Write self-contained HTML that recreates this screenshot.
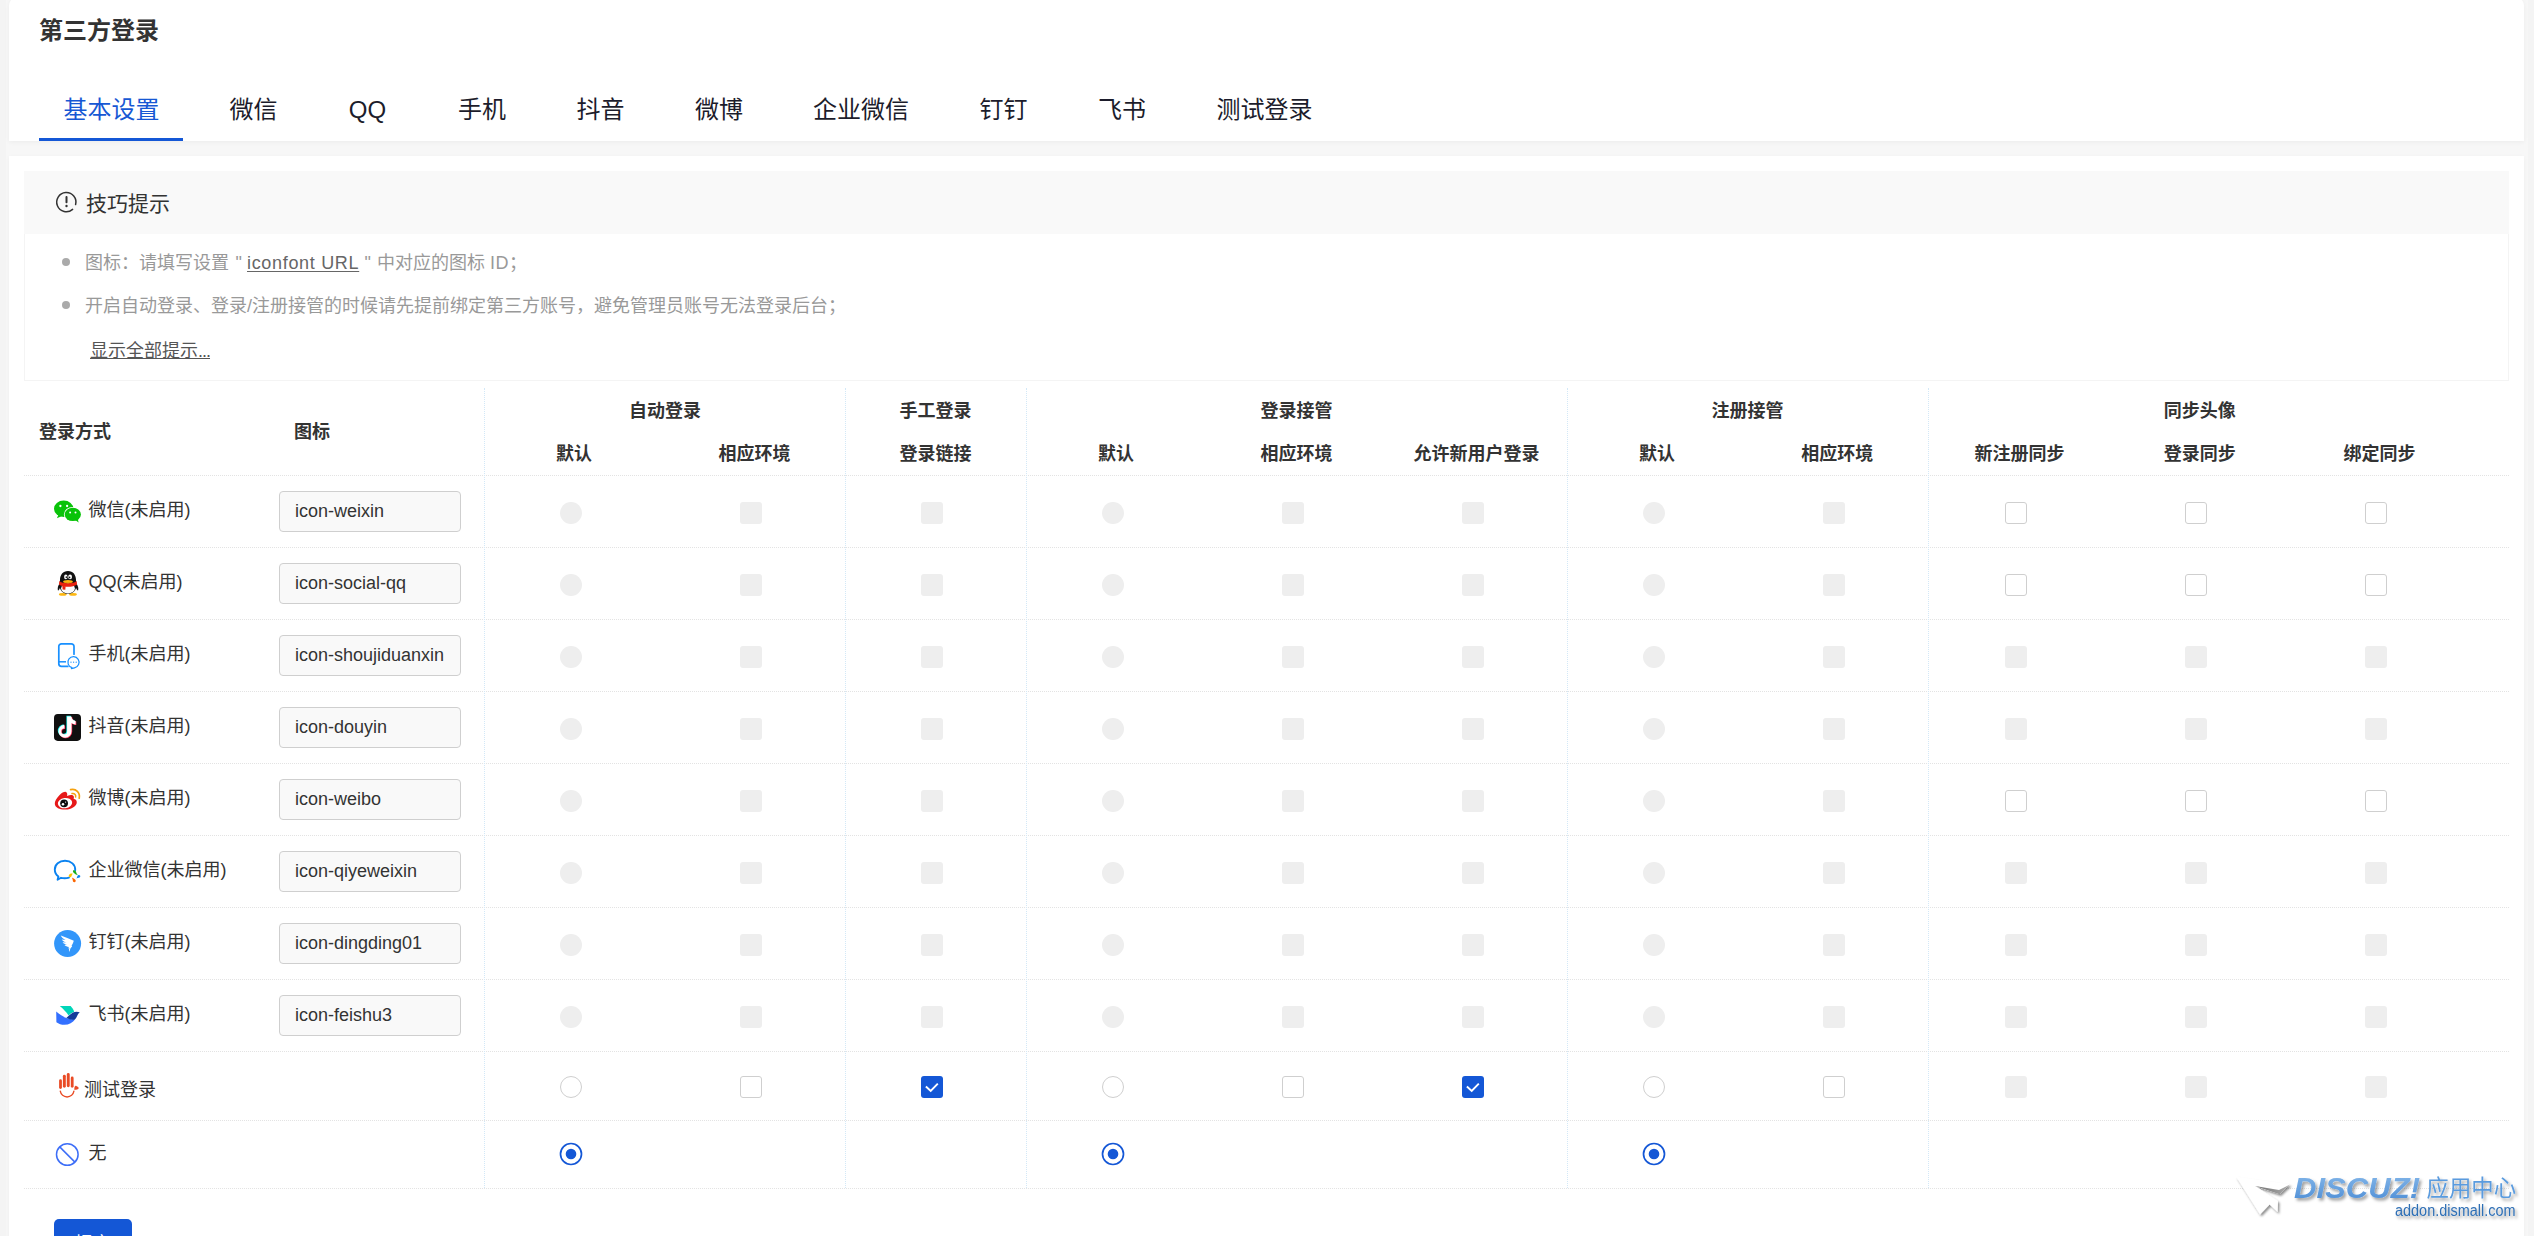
<!DOCTYPE html>
<html lang="zh-CN"><head><meta charset="utf-8"><title>第三方登录</title>
<style>
*{box-sizing:border-box;margin:0;padding:0}
html,body{width:2534px;height:1236px;overflow:hidden;background:#f4f4f4}
#wrap{position:absolute;left:6px;top:0;width:2522px;height:1236px;background:#f7f7f7}
body{position:relative;font-family:"Liberation Sans","Noto Sans CJK SC",sans-serif;color:#333;font-size:18px}
.abs{position:absolute}
#card1{position:absolute;left:9px;top:-4px;width:2515px;height:145px;background:#fff;border-radius:10px 10px 0 0;box-shadow:0 1px 5px rgba(0,0,0,.05)}
#title{position:absolute;left:39px;top:14px;font-size:24px;font-weight:bold;line-height:34px;color:#333;white-space:nowrap}
.tab{position:absolute;top:90px;height:40px;line-height:40px;font-size:24px;color:#1c1c2b;text-align:center;white-space:nowrap}
.tab.on{color:#1758d4}
#tabline{position:absolute;left:39px;top:138px;width:144px;height:3px;background:#1457d6}
#card2{position:absolute;left:9px;top:156px;width:2515px;height:1100px;background:#fff;box-shadow:0 1px 4px rgba(0,0,0,.04)}
#tips{position:absolute;left:24px;top:171px;width:2485px;height:210px;border:1px solid #f4f4f4;background:#fff}
#tipsh{position:absolute;left:24px;top:171px;width:2485px;height:63px;background:#f9f9f9}
#tipst{position:absolute;left:86px;top:189px;font-size:21px;line-height:30px;color:#333;white-space:nowrap}
.tip{position:absolute;left:85px;font-size:18px;line-height:26px;color:#999;white-space:nowrap}
.tip a,.more{color:#666;text-decoration:underline;text-underline-offset:2px}
.bul{position:absolute;left:62px;width:8px;height:8px;border-radius:50%;background:#aaa}
.more{position:absolute;left:90px;top:337.5px;font-size:18px;line-height:26px;color:#555;white-space:nowrap;text-underline-offset:1px}
.hl{position:absolute;left:24px;width:2485px;height:0;border-top:1px dotted #e3e3e3}
.vl{position:absolute;top:388px;height:800px;width:0;border-left:1px dotted #d3e8f7}
.th{position:absolute;font-weight:bold;font-size:18px;line-height:26px;color:#333;white-space:nowrap;transform:translateX(-50%)}
.thl{position:absolute;font-weight:bold;font-size:18px;line-height:26px;color:#333;white-space:nowrap}
.lab{position:absolute;font-size:18px;line-height:26px;color:#333;white-space:nowrap}
.inp{position:absolute;left:279px;width:182px;height:41px;border:1px solid #cfcfcf;border-radius:4px;background:#f9f9f9;font-family:"Liberation Sans",sans-serif;font-size:18px;line-height:39px;padding-left:15px;color:#333;white-space:nowrap;overflow:hidden}
.c{position:absolute;width:22px;height:22px}
.rd{border-radius:50%;background:#eee}
.cd{border-radius:3px;background:#eee}
.ru{border-radius:50%;background:#fff;border:1px solid #cfcfcf}
.cu{border-radius:3px;background:#fff;border:1px solid #cfcfcf}
.cc{border-radius:3px;background:#1457d6}
.rc{overflow:visible}
.ic{position:absolute;overflow:visible}
#btn{position:absolute;left:54px;top:1219px;width:78px;height:50px;border-radius:5px;background:#1457d6;color:#fff;font-size:18px;line-height:50px;text-align:center}
</style></head><body>
<div id="wrap"></div>
<div id="card1"></div>
<div id="title">第三方登录</div>
<div class="tab on" style="left:31.5px;width:160px">基本设置</div>
<div class="tab" style="left:173.5px;width:160px">微信</div>
<div class="tab" style="left:287.5px;width:160px">QQ</div>
<div class="tab" style="left:402.0px;width:160px">手机</div>
<div class="tab" style="left:520.5px;width:160px">抖音</div>
<div class="tab" style="left:639.0px;width:160px">微博</div>
<div class="tab" style="left:781.0px;width:160px">企业微信</div>
<div class="tab" style="left:923.5px;width:160px">钉钉</div>
<div class="tab" style="left:1042.0px;width:160px">飞书</div>
<div class="tab" style="left:1184.5px;width:160px">测试登录</div>
<div id="tabline"></div>
<div id="card2"></div>
<div id="tips"></div><div id="tipsh"></div>
<svg class="ic" style="left:55px;top:190px" width="23" height="23" viewBox="0 0 23 23"><path d="M17.6 19.4 A9.6 9.6 0 1 1 20.6 14.6" fill="none" stroke="#333" stroke-width="1.5" stroke-linecap="round"/><rect x="10.5" y="6" width="2" height="7.2" rx=".9" fill="#333"/><circle cx="11.5" cy="16" r="1.2" fill="#333"/></svg>
<div id="tipst">技巧提示</div>
<div class="bul" style="top:258px"></div><div class="tip" style="top:250px">图标：请填写设置</div><div class="tip" style="top:250px;left:235.5px">"</div><div class="tip" style="top:250px;left:247px"><a style="letter-spacing:.68px">iconfont URL</a></div><div class="tip" style="top:250px;left:364.5px">"</div><div class="tip" style="top:250px;left:377px">中对应的图标</div><div class="tip" style="top:250px;left:490px;letter-spacing:.4px">ID</div><div class="tip" style="top:250px;left:509px">；</div>
<div class="bul" style="top:301px"></div><div class="tip" style="top:293px">开启自动登录、登录/注册接管的时候请先提前绑定第三方账号，避免管理员账号无法登录后台；</div>
<div class="more">显示全部提示<span style="letter-spacing:-1px">...</span></div>
<div class="hl" style="top:475px"></div>
<div class="hl" style="top:547px"></div>
<div class="hl" style="top:619px"></div>
<div class="hl" style="top:691px"></div>
<div class="hl" style="top:763px"></div>
<div class="hl" style="top:835px"></div>
<div class="hl" style="top:907px"></div>
<div class="hl" style="top:979px"></div>
<div class="hl" style="top:1051px"></div>
<div class="hl" style="top:1120px"></div>
<div class="hl" style="top:1188px"></div>
<div class="vl" style="left:484px"></div>
<div class="vl" style="left:845px"></div>
<div class="vl" style="left:1026px"></div>
<div class="vl" style="left:1567px"></div>
<div class="vl" style="left:1928px"></div>
<div class="thl" style="left:39px;top:419px">登录方式</div>
<div class="thl" style="left:294px;top:419px">图标</div>
<div class="th" style="left:665.0px;top:398px">自动登录</div>
<div class="th" style="left:935.6px;top:398px">手工登录</div>
<div class="th" style="left:1296.4px;top:398px">登录接管</div>
<div class="th" style="left:1747.4px;top:398px">注册接管</div>
<div class="th" style="left:2199.7px;top:398px">同步头像</div>
<div class="th" style="left:574.1px;top:441px">默认</div>
<div class="th" style="left:754.4px;top:441px">相应环境</div>
<div class="th" style="left:935.6px;top:441px">登录链接</div>
<div class="th" style="left:1115.9px;top:441px">默认</div>
<div class="th" style="left:1296.4px;top:441px">相应环境</div>
<div class="th" style="left:1476.4px;top:441px">允许新用户登录</div>
<div class="th" style="left:1656.9px;top:441px">默认</div>
<div class="th" style="left:1837.3px;top:441px">相应环境</div>
<div class="th" style="left:2019.4px;top:441px">新注册同步</div>
<div class="th" style="left:2199.7px;top:441px">登录同步</div>
<div class="th" style="left:2379.4px;top:441px">绑定同步</div>
<svg class="ic" style="left:40px;top:485px" width="60" height="60" viewBox="0 0 60 60"><ellipse cx="23.7" cy="23.7" rx="9.7" ry="8.2" fill="#09c309"/><path d="M18.6 29.2 L16.9 33.3 L22 31 Z" fill="#09c309"/><ellipse cx="32.8" cy="29.4" rx="8.9" ry="7.5" fill="#fff"/><ellipse cx="32.8" cy="29.4" rx="8.1" ry="6.7" fill="#09c309"/><path d="M35.2 35 L38.6 37.4 L37.6 33.6 Z" fill="#09c309"/><circle cx="20.4" cy="21" r="1.15" fill="#fff"/><circle cx="27.1" cy="21" r="1.15" fill="#fff"/><circle cx="30.1" cy="27.5" r="1" fill="#fff"/><circle cx="35.5" cy="27.5" r="1" fill="#fff"/></svg>
<div class="lab" style="left:88.5px;top:497px">微信(未启用)</div>
<div class="inp" style="top:491px">icon-weixin</div>
<div class="c rd" style="left:560.0px;top:502px"></div>
<div class="c cd" style="left:740.0px;top:502px"></div>
<div class="c cd" style="left:921.0px;top:502px"></div>
<div class="c rd" style="left:1102.0px;top:502px"></div>
<div class="c cd" style="left:1282.0px;top:502px"></div>
<div class="c cd" style="left:1462.0px;top:502px"></div>
<div class="c rd" style="left:1643.0px;top:502px"></div>
<div class="c cd" style="left:1823.0px;top:502px"></div>
<div class="c cu" style="left:2005.0px;top:502px"></div>
<div class="c cu" style="left:2185.0px;top:502px"></div>
<div class="c cu" style="left:2365.0px;top:502px"></div>
<svg class="ic" style="left:40px;top:557px" width="60" height="60" viewBox="0 0 60 60"><ellipse cx="22.8" cy="37.4" rx="3.9" ry="1.4" fill="#fdb813"/><ellipse cx="33" cy="37.4" rx="3.9" ry="1.4" fill="#fdb813"/><path d="M19.6 26.5 C18 28.5 17.2 31.5 18 33.8 C19 33 19.8 31.5 20.4 30 Z" fill="#111"/><path d="M36.4 26.5 C38 28.5 38.8 31.5 38 33.8 C37 33 36.2 31.5 35.6 30 Z" fill="#111"/><path d="M28 13.9 C22.8 13.9 20 17.8 20 22.8 C20 24.5 19.6 26 19.6 28 C19.6 33.5 23 36.8 28 36.8 C33 36.8 36.4 33.5 36.4 28 C36.4 26 36 24.5 36 22.8 C36 17.8 33.2 13.9 28 13.9 Z" fill="#111"/><ellipse cx="28" cy="31.5" rx="6.9" ry="5" fill="#fbfbfb"/><path d="M19.3 24 C22 27 34 27 36.7 24 L37 27.4 C33 30.6 23 30.6 19 27.4 Z" fill="#e8220e"/><path d="M22.3 28.6 L25.6 29.6 L25.3 32.8 L22.6 32.4 Z" fill="#e8220e"/><ellipse cx="25.8" cy="19.9" rx="1.7" ry="2.3" fill="#fff"/><ellipse cx="30.1" cy="19.9" rx="1.9" ry="2.3" fill="#fff"/><ellipse cx="26.3" cy="20.2" rx=".7" ry="1" fill="#111"/><ellipse cx="29.6" cy="20.4" rx=".8" ry=".9" fill="#111"/><ellipse cx="28" cy="24.6" rx="4.9" ry="1.7" fill="#fbb40f"/><path d="M25.6 25.4 Q28 26.6 30.4 25.4" stroke="#d77e0a" stroke-width=".5" fill="none"/></svg>
<div class="lab" style="left:88.5px;top:569px">QQ(未启用)</div>
<div class="inp" style="top:563px">icon-social-qq</div>
<div class="c rd" style="left:560.0px;top:574px"></div>
<div class="c cd" style="left:740.0px;top:574px"></div>
<div class="c cd" style="left:921.0px;top:574px"></div>
<div class="c rd" style="left:1102.0px;top:574px"></div>
<div class="c cd" style="left:1282.0px;top:574px"></div>
<div class="c cd" style="left:1462.0px;top:574px"></div>
<div class="c rd" style="left:1643.0px;top:574px"></div>
<div class="c cd" style="left:1823.0px;top:574px"></div>
<div class="c cu" style="left:2005.0px;top:574px"></div>
<div class="c cu" style="left:2185.0px;top:574px"></div>
<div class="c cu" style="left:2365.0px;top:574px"></div>
<svg class="ic" style="left:40px;top:629px" width="60" height="60" viewBox="0 0 60 60"><path d="M34 25.2 V17.4 A2.6 2.6 0 0 0 31.4 14.8 H21.4 A2.6 2.6 0 0 0 18.8 17.4 V34.8 A2.6 2.6 0 0 0 21.4 37.4 H27.8" fill="none" stroke="#1890ff" stroke-width="1.7" stroke-linecap="round"/><path d="M18.8 32.8 H26" fill="none" stroke="#1890ff" stroke-width="1.5"/><path d="M32 38.7 A5.6 5.6 0 1 1 34.5 38.8 L31.4 39.6 Z" fill="#fff" stroke="#1890ff" stroke-width="1.2" stroke-linejoin="round"/><circle cx="31" cy="33.2" r=".65" fill="#1890ff"/><circle cx="33.6" cy="33.2" r=".65" fill="#1890ff"/><circle cx="36.2" cy="33.2" r=".65" fill="#1890ff"/></svg>
<div class="lab" style="left:88.5px;top:641px">手机(未启用)</div>
<div class="inp" style="top:635px">icon-shoujiduanxin</div>
<div class="c rd" style="left:560.0px;top:646px"></div>
<div class="c cd" style="left:740.0px;top:646px"></div>
<div class="c cd" style="left:921.0px;top:646px"></div>
<div class="c rd" style="left:1102.0px;top:646px"></div>
<div class="c cd" style="left:1282.0px;top:646px"></div>
<div class="c cd" style="left:1462.0px;top:646px"></div>
<div class="c rd" style="left:1643.0px;top:646px"></div>
<div class="c cd" style="left:1823.0px;top:646px"></div>
<div class="c cd" style="left:2005.0px;top:646px"></div>
<div class="c cd" style="left:2185.0px;top:646px"></div>
<div class="c cd" style="left:2365.0px;top:646px"></div>
<svg class="ic" style="left:40px;top:701px" width="60" height="60" viewBox="0 0 60 60"><rect x="14" y="12.9" width="27" height="27" rx="3.8" fill="#101010"/><path d="M27.1 15.4 H31.4 C31.7 17.8 33.2 19.6 35.6 20 V23.4 C34 23.4 32.6 22.9 31.5 22.1 V30.2 A6.5 6.5 0 1 1 24.4 23.8 V27.5 A2.9 2.9 0 1 0 27.1 30.4 Z" fill="#25f4ee" transform="translate(-.7,-.6)"/><path d="M27.1 15.4 H31.4 C31.7 17.8 33.2 19.6 35.6 20 V23.4 C34 23.4 32.6 22.9 31.5 22.1 V30.2 A6.5 6.5 0 1 1 24.4 23.8 V27.5 A2.9 2.9 0 1 0 27.1 30.4 Z" fill="#fe2c55" transform="translate(.7,.6)"/><path d="M27.1 15.4 H31.4 C31.7 17.8 33.2 19.6 35.6 20 V23.4 C34 23.4 32.6 22.9 31.5 22.1 V30.2 A6.5 6.5 0 1 1 24.4 23.8 V27.5 A2.9 2.9 0 1 0 27.1 30.4 Z" fill="#fff"/></svg>
<div class="lab" style="left:88.5px;top:713px">抖音(未启用)</div>
<div class="inp" style="top:707px">icon-douyin</div>
<div class="c rd" style="left:560.0px;top:718px"></div>
<div class="c cd" style="left:740.0px;top:718px"></div>
<div class="c cd" style="left:921.0px;top:718px"></div>
<div class="c rd" style="left:1102.0px;top:718px"></div>
<div class="c cd" style="left:1282.0px;top:718px"></div>
<div class="c cd" style="left:1462.0px;top:718px"></div>
<div class="c rd" style="left:1643.0px;top:718px"></div>
<div class="c cd" style="left:1823.0px;top:718px"></div>
<div class="c cd" style="left:2005.0px;top:718px"></div>
<div class="c cd" style="left:2185.0px;top:718px"></div>
<div class="c cd" style="left:2365.0px;top:718px"></div>
<svg class="ic" style="left:40px;top:773px" width="60" height="60" viewBox="0 0 60 60"><path d="M26.6 19.4 C25.6 18.2 22.6 19 19.6 22 C16.4 25.2 14.6 28.4 14.8 31 C15.2 34.8 20 36.8 25.4 36.6 C31.6 36.4 36.8 33.2 36.8 29.2 C36.8 27.2 35.2 26.2 33.6 25.8 C34.2 24.4 34 23 33 22.4 C31.6 21.6 29.4 22 27 23 C27.4 21.6 27.4 20.2 26.6 19.4 Z" fill="#e6191a"/><ellipse cx="25" cy="30.1" rx="7.2" ry="5.1" fill="#fff" transform="rotate(-8 25 30.1)"/><circle cx="24.1" cy="30.3" r="3.9" fill="#0c0c0c"/><circle cx="23" cy="31.2" r="1.25" fill="#fff"/><circle cx="25.6" cy="29.1" r=".6" fill="#fff"/><path d="M30.6 16.6 C36 15.2 40.4 19.6 39.2 25.2" fill="none" stroke="#f5a10e" stroke-width="1.7" stroke-linecap="round"/><path d="M32 20.6 C34.4 20 36.2 21.8 35.6 24" fill="none" stroke="#f5a10e" stroke-width="1.5" stroke-linecap="round"/></svg>
<div class="lab" style="left:88.5px;top:785px">微博(未启用)</div>
<div class="inp" style="top:779px">icon-weibo</div>
<div class="c rd" style="left:560.0px;top:790px"></div>
<div class="c cd" style="left:740.0px;top:790px"></div>
<div class="c cd" style="left:921.0px;top:790px"></div>
<div class="c rd" style="left:1102.0px;top:790px"></div>
<div class="c cd" style="left:1282.0px;top:790px"></div>
<div class="c cd" style="left:1462.0px;top:790px"></div>
<div class="c rd" style="left:1643.0px;top:790px"></div>
<div class="c cd" style="left:1823.0px;top:790px"></div>
<div class="c cu" style="left:2005.0px;top:790px"></div>
<div class="c cu" style="left:2185.0px;top:790px"></div>
<div class="c cu" style="left:2365.0px;top:790px"></div>
<svg class="ic" style="left:40px;top:845px" width="60" height="60" viewBox="0 0 60 60"><path d="M35.2 25.2 C35.6 19.6 30.8 15.8 25 15.8 C19.2 15.8 14.8 19.6 14.8 24.4 C14.8 27.4 16.2 29.8 18.4 31.4 L17.6 34.8 L21 32.8 C23.4 33.4 26.4 33.4 29 32.6" fill="none" stroke="#0a82f0" stroke-width="1.9" stroke-linecap="round" stroke-linejoin="round"/><path d="M33 25.6 C34.4 24.8 36 25.8 36.2 27.2 C36.4 28.4 37 29 38 29.6 C36.8 29.8 35.4 29.4 34.6 28.4 C33.6 28.2 32.6 26.8 33 25.6 Z" fill="#1aad19"/><path d="M29.2 29.8 C29.6 28.8 31.2 28 32.8 28.8 C32.2 29.4 31.8 30.2 31.6 31 C31.2 32.6 29.4 32.8 28.8 31.6 C28.6 31 28.8 30.2 29.2 29.8 Z" fill="#fbc400"/><path d="M31.8 32.6 C33 33 33.8 33.4 34.8 34.2 C36.2 35.2 36 37 34.6 37.2 C33.6 37.4 32.8 36.6 32.8 35.6 C32.8 34.4 32.4 33.6 31.8 32.6 Z" fill="#fb6500"/><path d="M36.4 33.6 C37 32.8 37.2 32 37.4 31 C37.8 29.8 39.6 29.6 40.2 30.8 C40.6 31.8 39.8 32.8 38.8 32.8 C37.8 33 37.2 33.2 36.4 33.6 Z" fill="#0a82f0"/></svg>
<div class="lab" style="left:88.5px;top:857px">企业微信(未启用)</div>
<div class="inp" style="top:851px">icon-qiyeweixin</div>
<div class="c rd" style="left:560.0px;top:862px"></div>
<div class="c cd" style="left:740.0px;top:862px"></div>
<div class="c cd" style="left:921.0px;top:862px"></div>
<div class="c rd" style="left:1102.0px;top:862px"></div>
<div class="c cd" style="left:1282.0px;top:862px"></div>
<div class="c cd" style="left:1462.0px;top:862px"></div>
<div class="c rd" style="left:1643.0px;top:862px"></div>
<div class="c cd" style="left:1823.0px;top:862px"></div>
<div class="c cd" style="left:2005.0px;top:862px"></div>
<div class="c cd" style="left:2185.0px;top:862px"></div>
<div class="c cd" style="left:2365.0px;top:862px"></div>
<svg class="ic" style="left:40px;top:917px" width="60" height="60" viewBox="0 0 60 60"><circle cx="27.6" cy="26.5" r="13.5" fill="#3296fa"/><path d="M20.8 18.6 C25 20.2 29.6 22 33.8 23.8 C33.4 25.6 32.6 27.2 31.6 28.8 L32.2 29.2 L30.4 31.4 L30.2 32.2 L29.2 34.9 L28.9 33 L29.4 31.3 L28.2 31.5 L28.9 29.9 C27.2 29.6 25.6 28.9 24.4 27.9 L27 27.8 C25.2 27.3 23.6 26.5 22.6 25.2 L26.4 25.4 C24.2 24.8 22.6 23.6 21.8 22.4 L25.6 23 C23.2 22 21.4 20.4 20.8 18.6 Z" fill="#fff"/></svg>
<div class="lab" style="left:88.5px;top:929px">钉钉(未启用)</div>
<div class="inp" style="top:923px">icon-dingding01</div>
<div class="c rd" style="left:560.0px;top:934px"></div>
<div class="c cd" style="left:740.0px;top:934px"></div>
<div class="c cd" style="left:921.0px;top:934px"></div>
<div class="c rd" style="left:1102.0px;top:934px"></div>
<div class="c cd" style="left:1282.0px;top:934px"></div>
<div class="c cd" style="left:1462.0px;top:934px"></div>
<div class="c rd" style="left:1643.0px;top:934px"></div>
<div class="c cd" style="left:1823.0px;top:934px"></div>
<div class="c cd" style="left:2005.0px;top:934px"></div>
<div class="c cd" style="left:2185.0px;top:934px"></div>
<div class="c cd" style="left:2365.0px;top:934px"></div>
<svg class="ic" style="left:40px;top:989px" width="60" height="60" viewBox="0 0 60 60"><path d="M19.8 17 H30.6 C32.4 18.8 33.6 20.8 34.2 22.8 C32.2 23.6 30.2 25 28.6 26.4 C26.2 23 23 19.6 19.8 17 Z" fill="#00d6b9"/><path d="M16.2 22.6 C19.4 25.4 23 27.8 26.6 29 C30 30.2 33 30.6 35.2 30.2 C32.8 33.6 29 35.8 24.4 35.8 C21.4 35.8 18.6 34.8 16.4 33.2 Z" fill="#3370ff"/><path d="M26.4 28.8 C28.4 27 30.6 24.8 33 23.4 C35.2 22.4 37.8 22.6 39.8 23.2 C38.2 24.4 37.4 26.6 36.4 28.4 C35.6 29.8 34.6 30.6 33.2 30.8 C31 31 28.6 30 26.4 28.8 Z" fill="#133c9a"/></svg>
<div class="lab" style="left:88.5px;top:1001px">飞书(未启用)</div>
<div class="inp" style="top:995px">icon-feishu3</div>
<div class="c rd" style="left:560.0px;top:1006px"></div>
<div class="c cd" style="left:740.0px;top:1006px"></div>
<div class="c cd" style="left:921.0px;top:1006px"></div>
<div class="c rd" style="left:1102.0px;top:1006px"></div>
<div class="c cd" style="left:1282.0px;top:1006px"></div>
<div class="c cd" style="left:1462.0px;top:1006px"></div>
<div class="c rd" style="left:1643.0px;top:1006px"></div>
<div class="c cd" style="left:1823.0px;top:1006px"></div>
<div class="c cd" style="left:2005.0px;top:1006px"></div>
<div class="c cd" style="left:2185.0px;top:1006px"></div>
<div class="c cd" style="left:2365.0px;top:1006px"></div>
<svg class="ic" style="left:40px;top:1058px" width="60" height="60" viewBox="0 0 60 60"><rect x="19.1" y="21.3" width="2.8" height="9.6" rx="1.4" fill="#e94b25"/><rect x="22.9" y="16.7" width="2.9" height="13" rx="1.45" fill="#e94b25"/><rect x="26.8" y="15" width="2.9" height="14.2" rx="1.45" fill="#e94b25"/><rect x="30.8" y="18.6" width="2.8" height="11.1" rx="1.4" fill="#e94b25"/><path d="M34.5 29.2 C35 27.4 36.4 27.2 37 28.4 C38.4 28.6 39.2 29.8 38.4 30.8 C37.4 31.8 35.6 32 34.2 31.8 Z" fill="#e94b25"/><path d="M20.3 33.2 A6.9 6.9 0 0 0 33.9 33.2" fill="none" stroke="#e94b25" stroke-width="1.4" stroke-linecap="round"/></svg>
<div class="lab" style="left:84px;top:1077px">测试登录</div>
<div class="c ru" style="left:560.0px;top:1076px"></div>
<div class="c cu" style="left:740.0px;top:1076px"></div>
<div class="c cc" style="left:921.0px;top:1076px"><svg width="22" height="22" viewBox="0 0 22 22" style="position:absolute;left:0;top:0"><path d="M4.9 10.5 L9.7 15 L16.8 7.7" fill="none" stroke="#fff" stroke-width="1.9" stroke-linejoin="miter"/></svg></div>
<div class="c ru" style="left:1102.0px;top:1076px"></div>
<div class="c cu" style="left:1282.0px;top:1076px"></div>
<div class="c cc" style="left:1462.0px;top:1076px"><svg width="22" height="22" viewBox="0 0 22 22" style="position:absolute;left:0;top:0"><path d="M4.9 10.5 L9.7 15 L16.8 7.7" fill="none" stroke="#fff" stroke-width="1.9" stroke-linejoin="miter"/></svg></div>
<div class="c ru" style="left:1643.0px;top:1076px"></div>
<div class="c cu" style="left:1823.0px;top:1076px"></div>
<div class="c cd" style="left:2005.0px;top:1076px"></div>
<div class="c cd" style="left:2185.0px;top:1076px"></div>
<div class="c cd" style="left:2365.0px;top:1076px"></div>
<svg class="ic" style="left:40px;top:1124px" width="60" height="60" viewBox="0 0 60 60"><circle cx="27.3" cy="30.5" r="10.8" fill="none" stroke="#3d6ef7" stroke-width="1.5"/><path d="M19.7 22.9 L34.9 38.1" stroke="#3d6ef7" stroke-width="1.5"/></svg>
<div class="lab" style="left:88.5px;top:1140px">无</div>
<div class="c rc" style="left:560.0px;top:1143px"><svg width="24" height="24" viewBox="0 0 24 24" style="position:absolute;left:-1px;top:-1px"><circle cx="12" cy="12" r="10.5" fill="#fff" stroke="#1457d6" stroke-width="1.7"/><circle cx="12" cy="12" r="5.3" fill="#1457d6"/></svg></div>
<div class="c rc" style="left:1102.0px;top:1143px"><svg width="24" height="24" viewBox="0 0 24 24" style="position:absolute;left:-1px;top:-1px"><circle cx="12" cy="12" r="10.5" fill="#fff" stroke="#1457d6" stroke-width="1.7"/><circle cx="12" cy="12" r="5.3" fill="#1457d6"/></svg></div>
<div class="c rc" style="left:1643.0px;top:1143px"><svg width="24" height="24" viewBox="0 0 24 24" style="position:absolute;left:-1px;top:-1px"><circle cx="12" cy="12" r="10.5" fill="#fff" stroke="#1457d6" stroke-width="1.7"/><circle cx="12" cy="12" r="5.3" fill="#1457d6"/></svg></div>
<div id="btn">提交</div>
<svg class="ic" style="left:2220px;top:1160px" width="314" height="76" viewBox="0 0 314 76"><defs><linearGradient id="wg" x1="0" y1="0" x2="0" y2="1"><stop offset="0" stop-color="#86b8ea"/><stop offset="1" stop-color="#4a8bd4"/></linearGradient><filter id="ws" x="-10%" y="-30%" width="130%" height="180%"><feDropShadow dx="2" dy="2.5" stdDeviation="1.4" flood-color="#000" flood-opacity=".38"/></filter><filter id="ws2" x="-20%" y="-20%" width="150%" height="150%"><feDropShadow dx="1.5" dy="2" stdDeviation="1.2" flood-color="#000" flood-opacity=".45"/></filter></defs><g filter="url(#ws2)"><path d="M16 16.6 L70 24.2 L59.6 34 L36 26.4 L58 41 L57.6 52 L49.6 44.4 L40 54.6 Z" fill="#fff"/></g><linearGradient id="wf" x1="0" y1="0" x2="1" y2="0"><stop offset="0" stop-color="#4a4a4a"/><stop offset="1" stop-color="#9a9a9a"/></linearGradient><path d="M35 26 L59.6 34.2 L70 24.4 L59 30 Z" fill="url(#wf)" opacity=".8"/><g filter="url(#ws)"><text x="74" y="38.2" font-family="Liberation Sans,sans-serif" font-size="29" font-weight="bold" font-style="italic" fill="url(#wg)" textLength="126" lengthAdjust="spacingAndGlyphs">DISCUZ!</text><text x="206.5" y="35.6" font-family="Noto Sans CJK SC,sans-serif" font-weight="400" font-size="22.4" fill="#5a9bde">应用中心</text><text x="175" y="55.6" font-family="Liberation Sans,sans-serif" font-size="15.6" fill="#2f6fb5" textLength="120.5" lengthAdjust="spacingAndGlyphs">addon.dismall.com</text></g></svg>
</body></html>
